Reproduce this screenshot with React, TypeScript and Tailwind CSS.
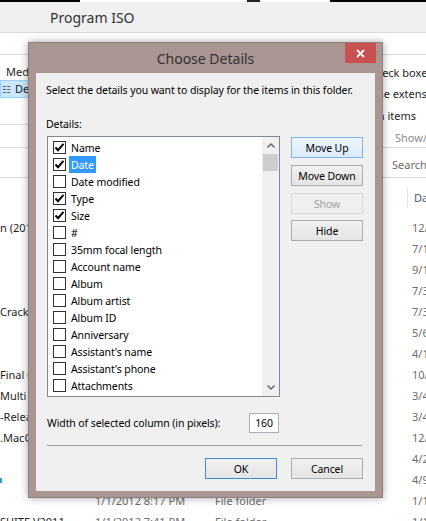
import React from "react";

const FONT = "font-['Segoe_UI','Noto_Sans',sans-serif]";

const DETAILS = [
  { name: "Name", checked: true },
  { name: "Date", checked: true, selected: true },
  { name: "Date modified" },
  { name: "Type", checked: true },
  { name: "Size", checked: true },
  { name: "#" },
  { name: "35mm focal length" },
  { name: "Account name" },
  { name: "Album" },
  { name: "Album artist" },
  { name: "Album ID" },
  { name: "Anniversary" },
  { name: "Assistant's name" },
  { name: "Assistant's phone" },
  { name: "Attachments" },
  { name: "Attributes" },
];

const FILES = [
  { name: "n (2012)", date: "12/9/2011 3:12 PM", type: "File folder", created: "12/9/2011" },
  { name: "", date: "7/12/2011 9:40 AM", type: "File folder", created: "7/12/2011" },
  { name: "", date: "9/1/2011 6:02 PM", type: "File folder", created: "9/1/2011" },
  { name: "", date: "7/3/2011 1:15 PM", type: "File folder", created: "7/3/2011" },
  { name: "Crack", date: "7/3/2011 1:20 PM", type: "File folder", created: "7/3/2011" },
  { name: "", date: "5/6/2012 8:44 PM", type: "File folder", created: "5/6/2012" },
  { name: "", date: "4/1/2012 4:31 PM", type: "File folder", created: "4/1/2012" },
  { name: "Final (", date: "10/5/2011 2:05 PM", type: "File folder", created: "10/5/2011" },
  { name: " Multi", date: "3/4/2012 7:50 PM", type: "File folder", created: "3/4/2012" },
  { name: "-Release", date: "3/4/2012 7:52 PM", type: "File folder", created: "3/4/2012" },
  { name: ".MacOS", date: "12/1/2011 11:03 AM", type: "File folder", created: "12/1/2011" },
  { name: "", date: "4/2/2012 5:17 PM", type: "File folder", created: "4/2/2012" },
  { name: "", dot: true, date: "4/9/2012 10:21 AM", type: "File folder", created: "4/9/2012" },
  { name: "", date: "1/1/2012 8:17 PM", type: "File folder", created: "1/1/2012" },
  { name: "SUITE V2011", date: "1/1/2012 7:41 PM", type: "File folder", created: "1/1/2012" },
];

function Check() {
  return (
    <svg width="11" height="11" viewBox="0 0 11 11">
      <path d="M1.5 5.5 L4 8.2 L9.5 1.8" fill="none" stroke="#000" strokeWidth="2" />
    </svg>
  );
}

function Chevron({ down }: { down?: boolean }) {
  return (
    <svg width="8" height="5" viewBox="0 0 8 5">
      <path
        d={down ? "M0.5 0.5 L4 4 L7.5 0.5" : "M0.5 4.5 L4 1 L7.5 4.5"}
        fill="none"
        stroke="#606060"
        strokeWidth="1.4"
      />
    </svg>
  );
}

function WinButton({
  children,
  variant = "normal",
  className = "",
}: {
  children: React.ReactNode;
  variant?: "normal" | "hot" | "default" | "disabled";
  className?: string;
}) {
  const styles = {
    normal: "border-[#acacac] bg-gradient-to-b from-[#f0f0f0] to-[#e5e5e5] text-black",
    hot: "border-[#7eb4ea] bg-gradient-to-b from-[#ecf4fc] to-[#dcecfc] text-black",
    default: "border-[#3c8ce0] bg-gradient-to-b from-[#f0f0f0] to-[#e5e5e5] text-black",
    disabled: "border-[#d9d9d9] bg-[#efefef] text-[#a0a0a0]",
  }[variant];
  return (
    <div
      className={`flex h-[21px] w-[72px] items-center justify-center border text-[10.5px] tracking-[-0.1px] ${styles} ${className}`}
    >
      {children}
    </div>
  );
}

function Explorer() {
  return (
    <div className="flex flex-col text-[11px] text-[#1e1e1e]">
      {/* top strip */}
      <div className="flex h-[2px] shrink-0">
        <div className="w-[80px] bg-black" />
        <div className="w-[167px] bg-white" />
        <div className="w-[13px] bg-[#222]" />
        <div className="w-[70px] bg-white" />
        <div className="flex-1 bg-black" />
      </div>
      {/* title bar */}
      <div className="flex h-[31px] shrink-0 items-center border-b border-[#dadada] bg-[#f0f0f0] pl-[50px] text-[14px] text-[#333]">
        Program ISO
      </div>
      {/* ribbon */}
      <div className="h-[22px] shrink-0 border-b border-[#dadada]" />
      <div className="flex h-[93px] shrink-0 border-b border-[#dadada]">
        <div className="w-[60px] shrink-0">
          <div className="mt-[10px] flex h-[14px] items-center">
            <div className="ml-[1px] flex h-[11px] w-[7px] flex-col gap-[1px]">
              <div className="h-[5px] bg-[#6aa84f]" />
              <div className="h-[5px] bg-[#2f5f9f]" />
            </div>
            <span className="ml-[5px] whitespace-nowrap">Medium icons</span>
          </div>
          <div className="mt-[1px] flex h-[18px] items-center border border-[#99d1ff] bg-[#cce8ff]">
            <span className="ml-[1px] text-[10px] leading-none text-[#555]">☷</span>
            <span className="ml-[4px]">Details</span>
          </div>
          <div className="mt-[26px] border-b border-[#dadada]" />
        </div>
        <div className="ml-[283px] flex shrink-0 flex-col whitespace-nowrap">
          <div className="mt-[10px] h-[21px] leading-[16px]">Item check boxes</div>
          <div className="-ml-[3px] h-[22px] leading-[16px]">File name extensions</div>
          <div className="ml-[4px] h-[22px] leading-[16px]">Hidden items</div>
          <div className="ml-[52px] leading-[16px] text-[#8a8a8a]">Show/hide</div>
        </div>
      </div>
      {/* address / search */}
      <div className="flex h-[30px] shrink-0 border-b border-[#dadada]">
        <div className="ml-[382px] flex shrink-0 items-center border-l border-[#dadada] pl-[9px] pt-[5px] text-[#6d6d6d]">
          Search
        </div>
      </div>
      {/* header */}
      <div className="mt-[10px] flex h-[20px] shrink-0 items-center">
        <div className="ml-[407px] h-full shrink-0 border-l border-[#e5e5e5]" />
        <span className="ml-[6px] shrink-0 whitespace-nowrap text-[#4c607a]">Date created</span>
      </div>
      {/* rows */}
      <div className="mt-[10px] flex shrink-0 flex-col">
        {FILES.map((f, i) => (
          <div key={i} className="flex h-[21px] shrink-0 items-center whitespace-nowrap">
            <div className="flex w-[95px] shrink-0 items-center overflow-hidden">
              {f.dot && <span className="h-[5px] w-[2px] bg-[#3a9ad9]" />}
              <span>{f.name}</span>
            </div>
            <div className="w-[120px] shrink-0 text-[#6d6d6d]">{f.date}</div>
            <div className="w-[197px] shrink-0 text-[#6d6d6d]">{f.type}</div>
            <div className="shrink-0 text-[#6d6d6d]">{f.created}</div>
          </div>
        ))}
      </div>
    </div>
  );
}

function ChooseDetails() {
  return (
    <div className="absolute left-[28px] top-[42px] flex h-[456px] w-[355px] flex-col border border-[#8f7e7a] bg-[#a99692] shadow-[0_0_8px_rgba(0,0,0,0.35)]">
      {/* title bar */}
      <div className="relative flex h-[30px] items-center justify-center">
        <span className="text-[14px] text-[#333]">Choose Details</span>
        <div className="absolute right-[6px] top-0 flex h-[20px] w-[31px] items-center justify-center bg-[#c75050]">
          <svg width="9" height="9" viewBox="0 0 9 9">
            <path d="M1 1 L8 8 M8 1 L1 8" stroke="#fff" strokeWidth="1.8" />
          </svg>
        </div>
      </div>
      {/* client */}
      <div className="mx-[7px] mb-[6px] flex flex-1 flex-col bg-[#f0f0f0] text-[10.5px] leading-[16px] tracking-[-0.1px] text-black">
        <p className="ml-[10px] mt-[9px] whitespace-nowrap">
          Select the details you want to display for the items in this folder.
        </p>
        <p className="ml-[10px] mt-[18px]">Details:</p>
        <div className="mt-[4px] flex">
          {/* listbox */}
          <div className="ml-[11px] flex h-[261px] w-[233px] border border-[#828790] bg-white">
            <div className="flex-1 overflow-hidden pt-[2px]">
              {DETAILS.map((d) => (
                <div key={d.name} className="flex h-[17px] items-center">
                  <div className="ml-[5px] flex h-[13px] w-[13px] items-center justify-center border border-[#333] bg-white">
                    {d.checked && <Check />}
                  </div>
                  <span
                    className={`ml-[3px] flex h-[17px] items-center whitespace-nowrap px-[2px] ${
                      d.selected ? "bg-[#3399ff] text-white" : ""
                    }`}
                  >
                    {d.name}
                  </span>
                </div>
              ))}
            </div>
            <div className="flex w-[17px] flex-col bg-[#f0f0f0]">
              <div className="flex h-[17px] items-center justify-center">
                <Chevron />
              </div>
              <div className="mx-[1px] h-[17px] bg-[#cdcdcd]" />
              <div className="flex-1" />
              <div className="flex h-[17px] items-center justify-center">
                <Chevron down />
              </div>
            </div>
          </div>
          {/* side buttons */}
          <div className="ml-[11px] mt-[1px] flex flex-col">
            <WinButton variant="hot">Move Up</WinButton>
            <WinButton className="mt-[7px]">Move Down</WinButton>
            <WinButton variant="disabled" className="mt-[7px]">
              Show
            </WinButton>
            <WinButton className="mt-[6px]">Hide</WinButton>
          </div>
        </div>
        <div className="mt-[16px] flex h-[20px] items-center">
          <span className="ml-[11px] w-[202px] whitespace-nowrap">
            Width of selected column (in pixels):
          </span>
          <div className="flex h-[20px] w-[30px] items-center justify-center border border-[#abadb3] bg-white">
            160
          </div>
        </div>
        <div className="ml-[11px] mt-[12px] h-px w-[315px] bg-[#a0a0a0]" />
        <div className="mt-[12px] flex">
          <WinButton variant="default" className="ml-[169px]">
            OK
          </WinButton>
          <WinButton className="ml-[14px]">Cancel</WinButton>
        </div>
      </div>
    </div>
  );
}

export default function App() {
  return (
    <div className={`relative h-[521px] w-[426px] overflow-hidden bg-white ${FONT}`}>
      <Explorer />
      <ChooseDetails />
    </div>
  );
}
